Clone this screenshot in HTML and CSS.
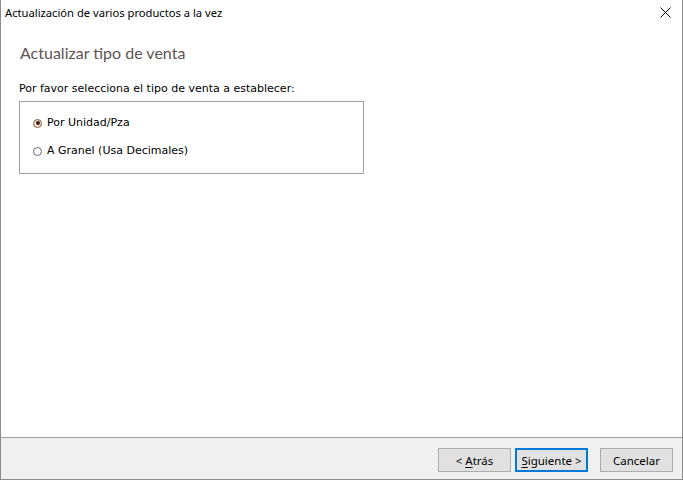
FILE: index.html
```html
<!DOCTYPE html>
<html lang="es">
<head>
<meta charset="utf-8">
<title>Actualización de varios productos a la vez</title>
<link rel="stylesheet" href="styles.css">
</head>
<body>
<div class="window">
  <div class="titlebar">
    <span class="title">Actualización de varios productos a la vez</span>
    <span class="close" aria-label="Cerrar">
      <svg width="11" height="11" viewBox="0 0 11 11"><path d="M0.5 0.5 L10.5 10.5 M10.5 0.5 L0.5 10.5" stroke="#000" stroke-width="1" fill="none"/></svg>
    </span>
  </div>
  <div class="content">
    <h1 class="heading">Actualizar tipo de venta</h1>
    <p class="prompt">Por favor selecciona el tipo de venta a establecer:</p>
    <div class="group">
      <label class="option"><span class="radio checked"></span>Por Unidad/Pza</label>
      <label class="option"><span class="radio"></span>A Granel (Usa Decimales)</label>
    </div>
  </div>
  <div class="footer">
    <button class="btn">&lt; <u>A</u>trás</button>
    <button class="btn focused"><u>S</u>iguiente &gt;</button>
    <button class="btn cancel">Cancelar</button>
  </div>
</div>
</body>
</html>
```

FILE: styles.css
```css
html, body {
  margin: 0;
  padding: 0;
  background: #ffffff;
}
.window {
  width: 683px;
  height: 480px;
  box-sizing: border-box;
  border-left: 1px solid #8c8c8c;
  border-right: 1px solid #8c8c8c;
  border-bottom: 1px solid #8c8c8c;
  display: flex;
  flex-direction: column;
  background: #ffffff;
}
.titlebar {
  height: 26px;
  display: flex;
  align-items: center;
  justify-content: space-between;
  padding: 0 11px 0 4px;
  font-family: "Noto Sans", "Open Sans", sans-serif;
  font-size: 11.2px;
  color: #000;
}
.title {
  position: relative;
  top: -1px;
}
.close {
  display: flex;
  width: 11px;
  height: 11px;
  position: relative;
  top: -1px;
}
.content {
  flex: 1;
  padding: 15px 0 0 18px;
}
.heading {
  margin: 0 0 0 1px;
  font-family: Lato, "Noto Sans", sans-serif;
  font-weight: normal;
  font-size: 16px;
  color: #5f5252;
  height: 28px;
  line-height: 24px;
}
.prompt {
  margin: 13px 0 0 0;
  font-family: "DejaVu Sans", sans-serif;
  font-size: 11px;
  line-height: 14px;
  color: #000;
}
.group {
  margin-top: 5px;
  width: 345px;
  height: 73px;
  box-sizing: border-box;
  border: 1px solid #a0a0a0;
  padding: 14px 0 0 13px;
  display: flex;
  flex-direction: column;
  gap: 14px;
}
.option {
  display: flex;
  align-items: center;
  font-family: "DejaVu Sans", sans-serif;
  font-size: 11px;
  line-height: 14px;
  color: #000;
}
.radio {
  width: 9px;
  height: 9px;
  box-sizing: border-box;
  border: 1px solid #6b6b6b;
  border-radius: 50%;
  background: #fafafa;
  margin-right: 5px;
  position: relative;
}
.radio.checked {
  border-color: #8a5a38;
  background: #f5e2d2;
}
.radio.checked::after {
  content: "";
  position: absolute;
  left: 1.5px;
  top: 1.5px;
  width: 4px;
  height: 4px;
  border-radius: 50%;
  background: #3a1f10;
}
.footer {
  height: 31px;
  border-top: 1px solid #a0a0a0;
  background: #f0f0f0;
  display: flex;
  justify-content: flex-end;
  align-items: flex-start;
  padding: 10px 9px 0 0;
  gap: 4px;
}
.btn {
  width: 73px;
  height: 24px;
  box-sizing: border-box;
  border: 1px solid #adadad;
  background: #e1e1e1;
  font-family: "Noto Sans", "Open Sans", sans-serif;
  font-size: 11.5px;
  color: #000;
  padding: 0;
  margin: 0;
}
.btn u {
  text-decoration-thickness: 1px;
  text-underline-offset: 2px;
}
.btn.focused {
  border: 2px solid #0078d7;
}
.btn.cancel {
  margin-left: 8px;
}
```
